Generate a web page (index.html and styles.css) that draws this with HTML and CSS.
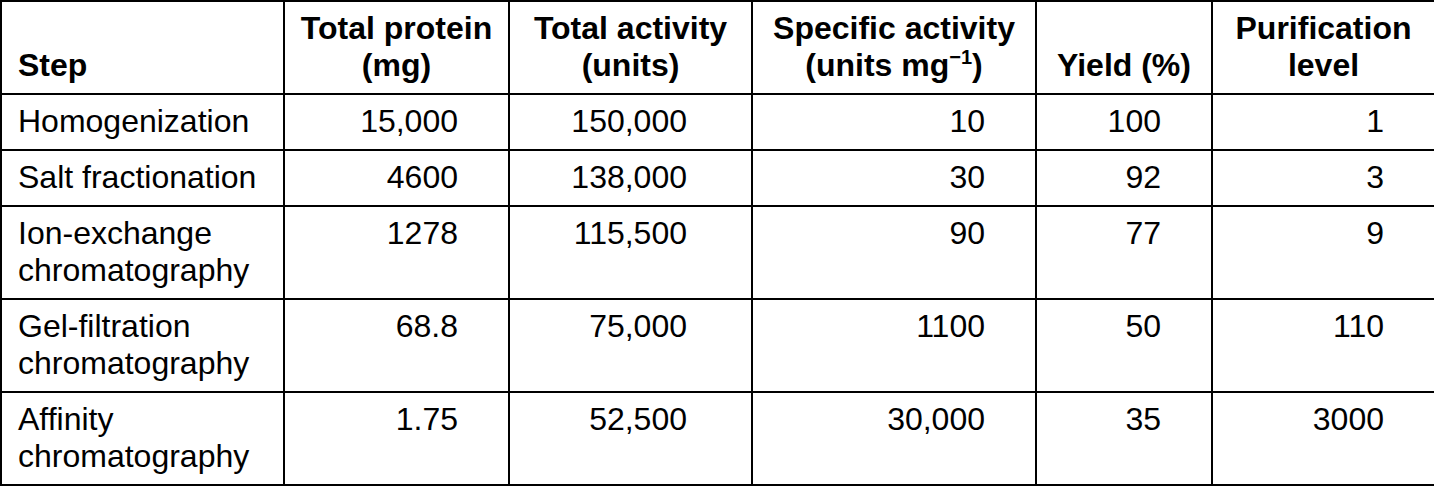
FILE: index.html
```html
<!DOCTYPE html>
<html lang="en">
<head>
<meta charset="utf-8">
<title>Purification table</title>
<link rel="stylesheet" href="styles.css">
</head>
<body>
<table class="purif">
  <colgroup>
    <col class="c-step">
    <col class="c-prot">
    <col class="c-act">
    <col class="c-spec">
    <col class="c-yield">
    <col class="c-level">
  </colgroup>
  <thead>
    <tr>
      <th class="h-step">Step</th>
      <th>Total protein<br>(mg)</th>
      <th>Total activity<br>(units)</th>
      <th>Specific activity<br>(units mg<sup>−1</sup>)</th>
      <th>Yield (%)</th>
      <th>Purification<br>level</th>
    </tr>
  </thead>
  <tbody>
    <tr>
      <td class="step">Homogenization</td>
      <td class="num">15,000</td>
      <td class="num act">150,000</td>
      <td class="num">10</td>
      <td class="num">100</td>
      <td class="num">1</td>
    </tr>
    <tr>
      <td class="step">Salt fractionation</td>
      <td class="num">4600</td>
      <td class="num act">138,000</td>
      <td class="num">30</td>
      <td class="num">92</td>
      <td class="num">3</td>
    </tr>
    <tr>
      <td class="step">Ion-exchange<br>chromatography</td>
      <td class="num">1278</td>
      <td class="num act">115,500</td>
      <td class="num">90</td>
      <td class="num">77</td>
      <td class="num">9</td>
    </tr>
    <tr>
      <td class="step">Gel-filtration<br>chromatography</td>
      <td class="num">68.8</td>
      <td class="num act">75,000</td>
      <td class="num">1100</td>
      <td class="num">50</td>
      <td class="num">110</td>
    </tr>
    <tr>
      <td class="step">Affinity<br>chromatography</td>
      <td class="num">1.75</td>
      <td class="num act">52,500</td>
      <td class="num">30,000</td>
      <td class="num">35</td>
      <td class="num">3000</td>
    </tr>
  </tbody>
</table>
</body>
</html>
```
FILE: styles.css
```css
html, body {
  margin: 0;
  padding: 0;
  background: #fff;
}

body {
  font-family: "Liberation Sans", Arial, sans-serif;
  color: #000;
}

.purif {
  width: 1434px;
  border-collapse: collapse;
  table-layout: fixed;
  font-size: 32px;
  line-height: 37px;
}

.c-step { width: 283px; }
.c-prot { width: 225px; }
.c-act { width: 243px; }
.c-spec { width: 284px; }
.c-yield { width: 176px; }
.c-level { width: 223px; }

.purif th,
.purif td {
  border: 2px solid #000;
  padding: 8px 10px 9px;
}

.purif th {
  font-weight: bold;
  text-align: center;
  vertical-align: bottom;
  padding-bottom: 9px;
}

.purif th.h-step {
  text-align: left;
  padding-left: 16px;
}

.purif sup {
  font-size: 20px;
  line-height: 0;
  vertical-align: 12px;
}

.purif td {
  vertical-align: top;
}

.purif td.step {
  text-align: left;
  padding-left: 16px;
}

.purif td.num {
  text-align: right;
  padding-right: 50px;
}

.purif td.num.act {
  padding-right: 64px;
}
```
